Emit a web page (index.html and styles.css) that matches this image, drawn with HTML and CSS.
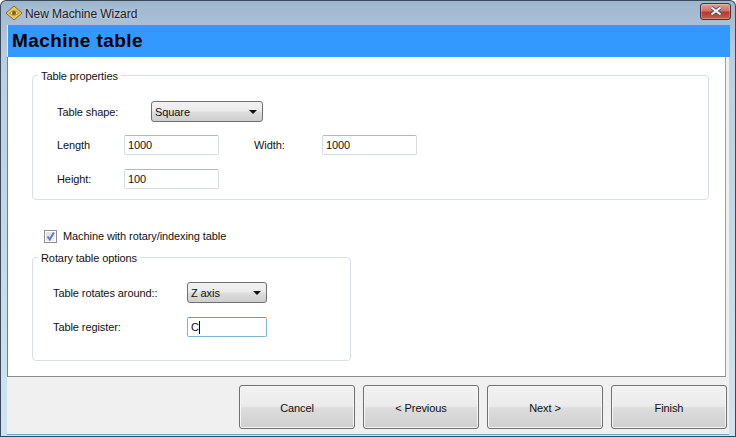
FILE: index.html
```html
<!DOCTYPE html>
<html lang="en">
<head>
<meta charset="utf-8">
<title>New Machine Wizard</title>
<link rel="stylesheet" href="styles.css">
</head>
<body>
<div class="window">
  <div class="titlebar">
    <svg class="app-icon" width="18" height="16" viewBox="0 0 18 16">
      <path d="M9 1 L17 8 L9 15 L1 8 Z" fill="#e8c75a" stroke="#8a6a1c" stroke-width="1"/>
      <path d="M4.5 8 Q9 3.5 13.5 8 Q9 12.5 4.5 8 Z" fill="#f7e7a0" stroke="#9a7a24" stroke-width=".8"/>
      <circle cx="9" cy="8" r="2" fill="#7a5a18"/>
    </svg>
    <span class="title-text">New Machine Wizard</span>
    <div class="close-btn">
      <svg width="14" height="10" viewBox="0 0 14 10">
        <path d="M2.5 1.5 L11.5 8.5 M11.5 1.5 L2.5 8.5" stroke="#4a4f5a" stroke-width="3.6"/>
        <path d="M2.5 1.5 L11.5 8.5 M11.5 1.5 L2.5 8.5" stroke="#f4f4f6" stroke-width="2.2"/>
      </svg>
    </div>
  </div>
  <div class="client">
    <h1 class="banner">Machine table</h1>
    <main class="panel">
      <fieldset class="group group-props">
        <legend>Table properties</legend>
        <div class="row row-shape">
          <span class="label label-shape">Table shape:</span>
          <div class="combo combo-shape"><span>Square</span><i class="arrow"></i></div>
        </div>
        <div class="row row-length">
          <span class="label label-field">Length</span>
          <div class="field">1000</div>
          <span class="label label-width">Width:</span>
          <div class="field">1000</div>
        </div>
        <div class="row row-height">
          <span class="label label-field">Height:</span>
          <div class="field">100</div>
        </div>
      </fieldset>
      <div class="check-row">
        <span class="check">
          <svg width="11" height="11" viewBox="0 0 11 11"><path d="M2.5 5.5 L4.8 8.5 L8.8 1.5" fill="none" stroke="#5f7fc0" stroke-width="2"/></svg>
        </span>
        <span class="label">Machine with rotary/indexing table</span>
      </div>
      <fieldset class="group group-rotary">
        <legend>Rotary table options</legend>
        <div class="row row-rotates">
          <span class="label label-rotary">Table rotates around::</span>
          <div class="combo combo-axis"><span>Z axis</span><i class="arrow"></i></div>
        </div>
        <div class="row row-register">
          <span class="label label-rotary">Table register:</span>
          <div class="field field-active"><span class="caret">C</span></div>
        </div>
      </fieldset>
    </main>
    <footer class="buttons">
      <div class="btn">Cancel</div>
      <div class="btn">&lt; Previous</div>
      <div class="btn">Next &gt;</div>
      <div class="btn">Finish</div>
    </footer>
  </div>
</div>
</body>
</html>
```
FILE: styles.css
```css
* { box-sizing: border-box; }
html, body { margin: 0; padding: 0; }
body { width: 736px; height: 437px; overflow: hidden; font: 11px "Liberation Sans", Arial, sans-serif; letter-spacing: -.09px; color: #111; }

.window {
  width: 736px; height: 437px;
  display: flex; flex-direction: column;
  background: linear-gradient(180deg, #9fb6cf 0, #b9cfe3 60px, #cfe3f1 100%);
  border: 1px solid #3a4a58;
  border-radius: 6px 6px 0 0;
  border-bottom-color: #1d4f66;
}
.titlebar { height: 24px; flex: none; display: flex; align-items: center; padding: 1px 4px 0 4px; }
.app-icon { flex: none; margin-top: -2px; }
.title-text { margin-left: 2px; font-size: 12px; color: #222; text-shadow: 0 0 4px #d8e4f0; letter-spacing: -.06px; }
.close-btn {
  margin-left: auto; width: 31px; height: 17px; margin-top: -5px;
  display: flex; align-items: center; justify-content: center;
  border: 1px solid #5c2a30; border-radius: 3px;
  background: linear-gradient(180deg, #dba295 0, #c9746a 45%, #b63a2a 55%, #c8604c 100%);
  box-shadow: inset 0 0 0 1px rgba(255,255,255,.25);
}

.client { flex: 1; margin: 0 6px 1px 6px; background: #f0f0f0; display: flex; flex-direction: column; border-bottom: 1px solid #6fa7c4; }
.banner {
  height: 32px; flex: none; margin: 0 -1px 0 1px; padding: 4px 0 0 4px;
  background: #3399ff; color: #000;
  font: bold 19px/23px "Liberation Sans", Arial, sans-serif;
  letter-spacing: .4px;
}
.panel {
  height: 320px; flex: none; margin: 0 3px 0 0;
  background: #fff;
  border-left: 1px solid #7d7d7d; border-right: 1px solid #a0a0a0; border-bottom: 1px solid #8a8a8a;
  padding: 11px 16px 0 24px;
}

.group {
  margin: 0; padding: 0; min-width: 0;
  border: 1px solid #d5dfe5; border-radius: 4px;
  color: #111;
}
.group legend { margin-left: 5px; padding: 2px 3px 0; line-height: 13px; }
.group-props { height: 132px; padding-top: 18px; }
.group-rotary { width: 319px; height: 111px; margin-top: 7px; padding-top: 17px; }

.row { display: flex; align-items: center; }
.label { white-space: nowrap; }
.row-shape { padding-left: 24px; }
.label-shape { width: 94px; }
.row-length { margin-top: 13px; padding-left: 24px; }
.row-height { margin-top: 14px; padding-left: 24px; }
.label-field { width: 67px; }
.label-width { width: 68px; margin-left: 35px; }
.row-rotates { padding-left: 20px; }
.row-register { margin-top: 14px; padding-left: 20px; }
.label-rotary { width: 134px; }

.combo {
  height: 21px; display: flex; align-items: center; justify-content: space-between;
  padding: 0 5px 0 3px;
  border: 1px solid #707070; border-radius: 3px;
  background: linear-gradient(180deg, #f2f2f2 0, #ebebeb 48%, #dddddd 52%, #cfcfcf 100%);
}
.combo-shape { width: 112px; }
.combo-axis { width: 80px; }
.arrow { width: 0; height: 0; border: 4px solid transparent; border-top: 4px solid #111; border-bottom: 0; }

.field {
  width: 95px; height: 20px; padding: 0 3px;
  line-height: 18px; background: #fff;
  border: 1px solid #d6dbe0; border-top-color: #b4b8bd; border-radius: 2px;
}
.group-rotary .field { width: 80px; }
.field-active { border-color: #7eb4d8; border-top-color: #5d9cc6; }
.caret { display: inline-block; padding-right: 0; border-right: 1px solid #000; line-height: 13px; vertical-align: middle; margin-top: -2px; }

.check-row { display: flex; align-items: center; margin: 29px 0 0 12px; height: 14px; }
.check {
  width: 13px; height: 13px; margin-right: 6px; flex: none;
  display: flex; align-items: center; justify-content: center;
  border: 1px solid #8e8f8f;
  background: linear-gradient(135deg, #d8dbe0, #f3f4f6);
  box-shadow: inset 0 0 0 1px #ffffff;
}

.buttons { flex: 1; display: flex; justify-content: flex-end; gap: 8px; padding: 8px 2px 0 0; }
.btn {
  width: 116px; height: 44px; padding-top: 1px;
  display: flex; align-items: center; justify-content: center;
  border: 1px solid #707070; border-radius: 3px;
  background: linear-gradient(180deg, #f2f2f2 0, #ebebeb 48%, #dddddd 52%, #cfcfcf 100%);
  box-shadow: inset 0 0 0 1px #f6f6f6;
}
```
